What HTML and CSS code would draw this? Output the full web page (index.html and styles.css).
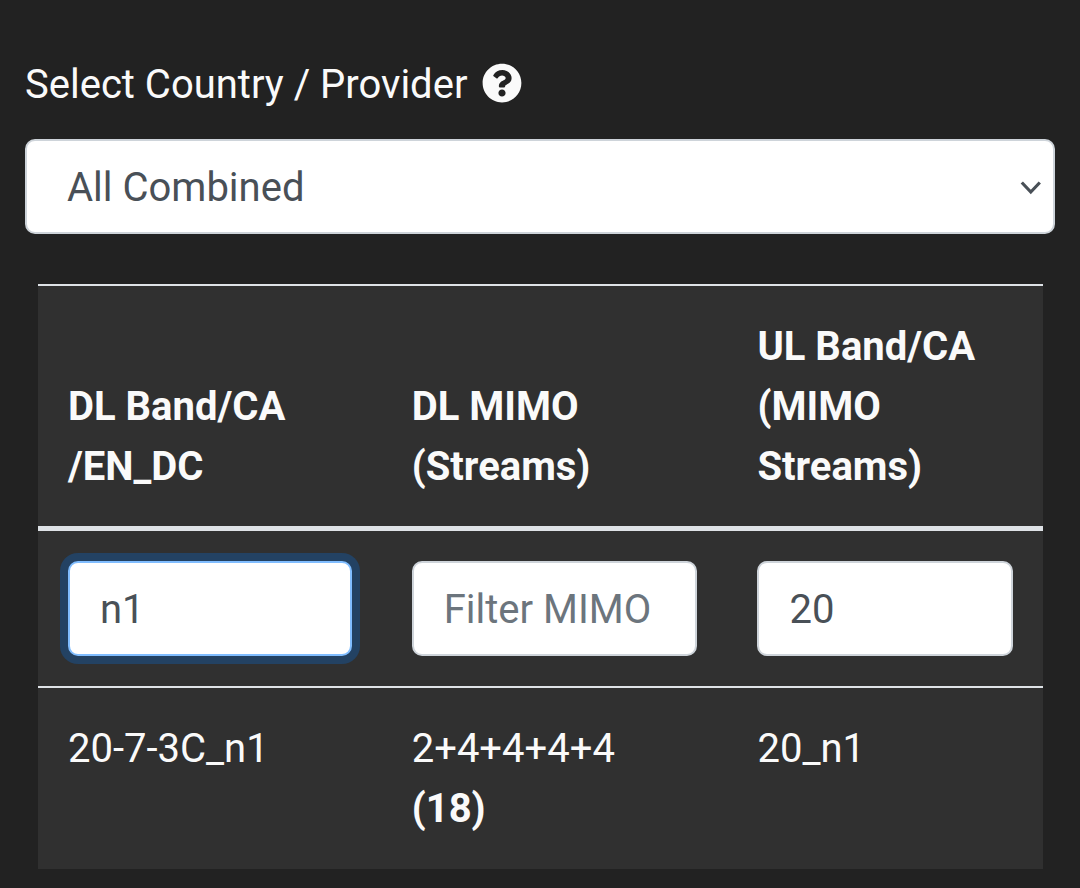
FILE: index.html
```html
<!DOCTYPE html>
<html lang="en">
<head>
    <meta charset="UTF-8">
    <meta name="viewport" content="width=device-width, initial-scale=1.0">
    <title>Band Combinations</title>
    <link rel="stylesheet" href="styles.css">
</head>
<body>
    <main class="page">
        <div class="provider-label">
            <label for="provider">Select Country / Provider</label>
            <button type="button" class="help-btn" aria-label="Help">
                <svg width="40" height="40" viewBox="0 0 512 512">
                    <path fill="currentColor" d="M504 256c0 136.997-111.043 248-248 248S8 392.997 8 256C8 119.083 119.043 8 256 8s248 111.083 248 248zM262.655 90c-54.497 0-89.255 22.957-116.549 63.758-3.536 5.286-2.353 12.415 2.715 16.258l34.699 26.31c5.205 3.947 12.621 3.008 16.665-2.122 17.864-22.658 30.113-35.797 57.303-35.797 20.429 0 45.698 13.148 45.698 32.958 0 14.976-12.363 22.667-32.534 33.976C247.128 238.528 216 254.941 216 296v4c0 6.627 5.373 12 12 12h56c6.627 0 12-5.373 12-12v-1.333c0-28.462 83.186-29.647 83.186-106.667 0-58.002-60.165-102-116.531-102zM256 338c-25.365 0-46 20.635-46 46 0 25.364 20.635 46 46 46s46-20.636 46-46c0-25.364-20.635-46-46-46z"/>
                </svg>
            </button>
        </div>

        <div class="select-wrap">
            <select id="provider" class="form-control provider-select">
                <option selected>All Combined</option>
            </select>
            <svg class="chevron" width="24" height="16" viewBox="0 0 24 16">
                <path d="M2.8 3.5 L11.8 13 L20.8 3.5" fill="none" stroke="currentColor" stroke-width="3.2"/>
            </svg>
        </div>

        <div class="table-wrap">
            <table class="combos">
                <colgroup>
                    <col class="col-dl">
                    <col class="col-mimo">
                    <col class="col-ul">
                </colgroup>
                <thead>
                    <tr>
                        <th scope="col">DL Band/CA<br>/EN_DC</th>
                        <th scope="col">DL MIMO (Streams)</th>
                        <th scope="col">UL Band/CA (MIMO Streams)</th>
                    </tr>
                </thead>
                <tbody>
                    <tr class="filters">
                        <td><input type="text" class="form-control active" value="n1" aria-label="Filter DL band"></td>
                        <td><input type="text" class="form-control" placeholder="Filter MIMO" aria-label="Filter MIMO"></td>
                        <td><input type="text" class="form-control" value="20" aria-label="Filter UL band"></td>
                    </tr>
                    <tr>
                        <td>20-7-3C_n1</td>
                        <td>2+4+4+4+4 <strong>(18)</strong></td>
                        <td>20_n1</td>
                    </tr>
                </tbody>
            </table>
        </div>
    </main>
</body>
</html>
```
FILE: styles.css
```css
* {
    box-sizing: border-box;
}

body {
    margin: 0;
    background: #222222;
    color: #fafafa;
    font-family: Roboto, sans-serif;
    font-size: 40px;
    line-height: 60px;
}

.page {
    padding: 55px 25px 19px;
}

.provider-label {
    display: flex;
    align-items: flex-start;
    gap: 15px;
    margin-bottom: 24px;
}

.help-btn {
    display: flex;
    margin-top: 8px;
    padding: 0;
    border: none;
    background: none;
    color: inherit;
    cursor: pointer;
}

.form-control {
    display: block;
    width: 100%;
    height: 95px;
    padding: 2px 30px 0;
    border: 2px solid #ced4da;
    border-radius: 10px;
    background: #fff;
    color: #495057;
    font: inherit;
}

.form-control::placeholder {
    color: #6c757d;
    opacity: 1;
}

.form-control:focus,
.form-control.active {
    border-color: #80bdff;
    outline: none;
    box-shadow: 0 0 0 8px #234263;
}

.select-wrap {
    display: grid;
    align-items: center;
    margin-bottom: 50px;
}

.provider-select {
    grid-area: 1 / 1;
    padding: 2px 40px 0;
    appearance: none;
}

.chevron {
    grid-area: 1 / 1;
    justify-self: end;
    margin-right: 12px;
    color: #495057;
    pointer-events: none;
}

.table-wrap {
    padding: 0 12px 0 13px;
}

.combos {
    width: 100%;
    table-layout: fixed;
    border-spacing: 0;
    background: #303030;
}

.col-dl {
    width: 34.2%;
}

.col-mimo {
    width: 34.4%;
}

.combos th,
.combos td {
    padding: 31px 30px 30px;
    border-top: 2px solid #dee2e6;
    text-align: left;
    vertical-align: top;
}

.combos th {
    padding-bottom: 29px;
    border-bottom: 5px solid #dee2e6;
    font-weight: 700;
    vertical-align: bottom;
}

.combos .filters td {
    padding-top: 30px;
    border-top: none;
}
```
